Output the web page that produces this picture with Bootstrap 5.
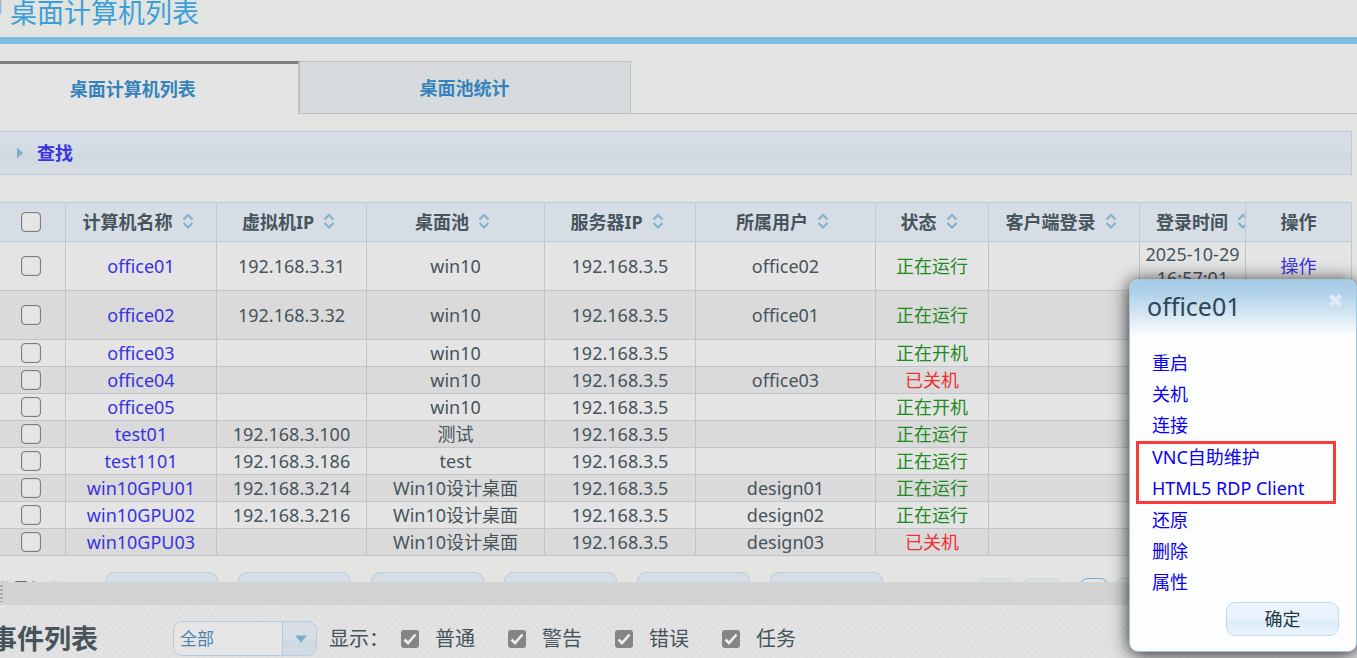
<!DOCTYPE html>
<html lang="zh-CN">
<head>
<meta charset="utf-8">
<meta name="viewport" content="width=device-width, initial-scale=1">
<title>桌面计算机列表</title>
<link rel="stylesheet" href="https://cdn.jsdelivr.net/npm/bootstrap@5.3.0/dist/css/bootstrap.min.css">
<style>
body{font-family:"Noto Sans","Noto Sans CJK SC",sans-serif;font-size:18px;line-height:26px;color:#46545c;background:#e2e4e2}
a{text-decoration:none;color:#3832e2}
.list-pane{min-height:0;background:linear-gradient(#e2e4e2 200px,#e4e4e3 560px)}
.page-head{height:44px;border-bottom:7px solid #7cbee0}
.page-head h1{font-size:27px;line-height:26px;font-weight:400;color:#3d9fd6}
.head-icon{width:2px;height:14px;background:linear-gradient(90deg,#8bb2cf,#d5dade)}
.pane-tabs{margin-top:17px;height:53px;border-bottom:1px solid #bcc1c3}
.pane-tabs a{font-weight:700;color:#3583bb}
.tab-on{width:22%;height:53px;background:#e4e4e4;border-top:3px solid #808080;border-right:1px solid #bcc1c3}
.tab-off{width:332px;height:53px;background:#d6dadd;border:1px solid #bcc1c3}
.find-bar{margin:17px 5px 27px 0;height:44px;border:1px solid #bccbd8;border-left:0;background:linear-gradient(#d7dee7,#d4dce4 48%,#cfd8df 54%,#d8dce5)}
.find-bar a{font-weight:700;color:#3832e2;margin-left:13px}
.grid-wrap{margin-right:5px}
.pc-table{table-layout:fixed;border-collapse:collapse;width:100%;margin-left:-1px;text-align:center}
.pc-table th,.pc-table td{border:1px solid #bfc4c8;padding:0;height:27px;overflow:hidden;white-space:nowrap;vertical-align:middle}
.pc-table th{height:39px;background:#d6dde5;border-color:#bbcbd9;font-weight:700;color:#46545c}
.pc-table th.sortable{padding-right:6px}
.pc-table tbody tr:nth-child(odd){background:#e4e4e4}
.pc-table tbody tr:nth-child(even){background:#dadada}
.pc-table .tall td{height:49px}
.pc-table .stamp{white-space:normal;line-height:24px}
.pc-table svg{margin-left:9px;vertical-align:0}
.w-pick{width:66px}.w-name{width:151px}.w-ip{width:150px}.w-pool{width:178px}.w-user{width:180px}.w-state{width:113px}.w-op{width:106px}
.ok{color:#228a22}.off{color:#ee3030}
.pick{appearance:none;display:block;width:20px;height:20px;margin:0 auto;border:1px solid #7c7c7c;border-radius:4px;background:#e5e5e5;box-shadow:inset 0 0 1px #7c7c7c;position:relative;left:-2px}
.pager{margin-top:16px;gap:20px}
.pager-note{width:91px;margin-left:-6px;padding-top:5px;flex:none;white-space:nowrap}
.act{width:113px;height:34px;flex:none;border:1px solid #bccbd8;border-radius:9px;background:#d6dde5}
.pages{margin-left:72px;padding-top:6px;gap:5px}
.nav-pg{height:30px;width:42px;flex:none;border:1px solid #cfd6dc;border-radius:9px;background:#dce0e3}
.nav-pg.num{width:30px;border-color:#bccbd8}
.nav-pg.now{border-color:#6ba9d4;background:#e2e4e5;margin-left:10px}
.splitter{height:23px;flex:none;background:#d3d3d3}
.grip{width:3px;height:17px;background:repeating-linear-gradient(#aaa 0 2px,#d3d3d3 2px 4px)}
.event-pane{height:53px;flex:none;padding-top:16px;background:repeating-linear-gradient(45deg,rgba(0,0,0,.012) 0 2px,transparent 2px 5px),repeating-linear-gradient(-45deg,rgba(0,0,0,.012) 0 2px,transparent 2px 5px),#e3e3e3}
.event-pane h2{width:108px;margin-left:-10px;font-size:27px;line-height:36px;font-weight:700}
.type-box{width:144px;height:35px;margin:0 12px 0 75px}
.type-box select{appearance:none;width:100%;height:100%;padding:0 6px;border:1px solid #b5cadb;border-radius:9px;color:#4d83aa;font-size:17px;background:linear-gradient(#b5cadb,#b5cadb) 108px 0/1px 100% no-repeat,linear-gradient(#d7dee6 50%,#ccd8e0 60%,#d4dce4) 109px 0/34px 100% no-repeat,#e5e5e5}
.type-box svg{right:10px;top:14px}
.flag{font-size:20px;line-height:36px;gap:16px}
.flags{gap:33px}
.tick{appearance:none;width:18px;height:18px;margin:0;border-radius:3px;background:#858585 url("data:image/svg+xml,%3Csvg xmlns='http://www.w3.org/2000/svg' viewBox='0 0 18 18'%3E%3Cpath d='M3.5 9.5 7 13 14.5 4.5' fill='none' stroke='%23eee' stroke-width='2.6'/%3E%3C/svg%3E")}
.op-dialog{top:279px;right:0;width:228px;border:1px solid #9fc6df;border-radius:9px;background:#fcfefe;box-shadow:0 2px 18px rgba(0,0,0,.85);overflow:hidden}
.dlg-head{height:55px;padding:0 13px 0 17px;background:linear-gradient(#a4cae5,#b4d3ea 28%,#fafdfe)}
.dlg-head h3{font-size:25px;line-height:52px;font-weight:400;color:#2f4656}
.dlg-head button{margin-top:13px;height:15px;line-height:0}
.dlg-list{margin:13px 0 0 22px;line-height:31px}
.dlg-list a{color:#0a00f0;display:block}
.marked{position:relative;margin:1px 0}
.marked::after{content:"";position:absolute;left:-16px;top:-1px;width:200px;height:63px;border:3px solid #f93a3a;pointer-events:none}
.dlg-ok{width:113px;height:34px;margin:4px 17px 15px auto;border:1px solid #c0dbee;border-radius:9px;color:#233942;background:linear-gradient(#eaf3fc 50%,#ddedfa 54%,#eaf3fc)}
</style>
</head>
<body class="vh-100 d-flex flex-column overflow-hidden position-relative">
<main class="list-pane flex-grow-1 overflow-hidden">
  <header class="page-head d-flex"><span class="head-icon me-2"></span><h1 class="mb-0">桌面计算机列表</h1></header>
  <nav class="pane-tabs d-flex">
    <a href="#" class="tab-on d-flex align-items-center justify-content-center pe-5"><span class="ps-3">桌面计算机列表</span></a>
    <a href="#" class="tab-off d-flex align-items-center justify-content-center">桌面池统计</a>
  </nav>
  <section class="find-bar d-flex align-items-center ps-3">
    <svg width="8" height="12" viewBox="0 0 8 12"><path d="M1 0.500 7 6 1 11.500Z" fill="#7fadcb"/></svg>
    <a href="#">查找</a>
  </section>
  <svg class="d-none"><symbol id="sort" viewBox="0 0 12 16"><path d="M1.500 6.500 6 2l4.500 4.500M1.500 10 6 14.500 10.500 10" fill="none" stroke="#80b0cd" stroke-width="2"/></symbol></svg>
  <div class="grid-wrap">
  <table class="pc-table">
    <colgroup><col class="w-pick"><col class="w-name"><col class="w-ip"><col class="w-pool"><col class="w-name"><col class="w-user"><col class="w-state"><col class="w-name"><col class="w-op"><col class="w-op"></colgroup>
    <thead><tr>
      <th><input class="pick" type="checkbox" aria-label="全选"></th>
      <th class="sortable">计算机名称<svg width="12" height="16"><use href="#sort"/></svg></th>
      <th class="sortable">虚拟机IP<svg width="12" height="16"><use href="#sort"/></svg></th>
      <th class="sortable">桌面池<svg width="12" height="16"><use href="#sort"/></svg></th>
      <th class="sortable">服务器IP<svg width="12" height="16"><use href="#sort"/></svg></th>
      <th class="sortable">所属用户<svg width="12" height="16"><use href="#sort"/></svg></th>
      <th class="sortable">状态<svg width="12" height="16"><use href="#sort"/></svg></th>
      <th class="sortable">客户端登录<svg width="12" height="16"><use href="#sort"/></svg></th>
      <th class="text-start"><span class="ps-3">登录时间</span><svg width="12" height="16"><use href="#sort"/></svg></th>
      <th>操作</th>
    </tr></thead>
    <tbody>
      <tr class="tall"><td><input class="pick" type="checkbox" aria-label="office01"></td><td><a href="#">office01</a></td><td>192.168.3.31</td><td>win10</td><td>192.168.3.5</td><td>office02</td><td class="ok">正在运行</td><td></td><td class="stamp">2025-10-29 16:57:01</td><td><a href="#">操作</a></td></tr>
      <tr class="tall"><td><input class="pick" type="checkbox" aria-label="office02"></td><td><a href="#">office02</a></td><td>192.168.3.32</td><td>win10</td><td>192.168.3.5</td><td>office01</td><td class="ok">正在运行</td><td></td><td></td><td></td></tr>
      <tr><td><input class="pick" type="checkbox" aria-label="office03"></td><td><a href="#">office03</a></td><td></td><td>win10</td><td>192.168.3.5</td><td></td><td class="ok">正在开机</td><td></td><td></td><td></td></tr>
      <tr><td><input class="pick" type="checkbox" aria-label="office04"></td><td><a href="#">office04</a></td><td></td><td>win10</td><td>192.168.3.5</td><td>office03</td><td class="off">已关机</td><td></td><td></td><td></td></tr>
      <tr><td><input class="pick" type="checkbox" aria-label="office05"></td><td><a href="#">office05</a></td><td></td><td>win10</td><td>192.168.3.5</td><td></td><td class="ok">正在开机</td><td></td><td></td><td></td></tr>
      <tr><td><input class="pick" type="checkbox" aria-label="test01"></td><td><a href="#">test01</a></td><td>192.168.3.100</td><td>测试</td><td>192.168.3.5</td><td></td><td class="ok">正在运行</td><td></td><td></td><td></td></tr>
      <tr><td><input class="pick" type="checkbox" aria-label="test1101"></td><td><a href="#">test1101</a></td><td>192.168.3.186</td><td>test</td><td>192.168.3.5</td><td></td><td class="ok">正在运行</td><td></td><td></td><td></td></tr>
      <tr><td><input class="pick" type="checkbox" aria-label="win10GPU01"></td><td><a href="#">win10GPU01</a></td><td>192.168.3.214</td><td>Win10设计桌面</td><td>192.168.3.5</td><td>design01</td><td class="ok">正在运行</td><td></td><td></td><td></td></tr>
      <tr><td><input class="pick" type="checkbox" aria-label="win10GPU02"></td><td><a href="#">win10GPU02</a></td><td>192.168.3.216</td><td>Win10设计桌面</td><td>192.168.3.5</td><td>design02</td><td class="ok">正在运行</td><td></td><td></td><td></td></tr>
      <tr><td><input class="pick" type="checkbox" aria-label="win10GPU03"></td><td><a href="#">win10GPU03</a></td><td></td><td>Win10设计桌面</td><td>192.168.3.5</td><td>design03</td><td class="off">已关机</td><td></td><td></td><td></td></tr>
    </tbody>
  </table>
  </div>
  <div class="pager d-flex">
    <span class="pager-note">批量操作</span>
    <button class="act" aria-label="启动"></button><button class="act" aria-label="关机"></button><button class="act" aria-label="重启"></button><button class="act" aria-label="还原"></button><button class="act" aria-label="删除"></button><button class="act" aria-label="刷新"></button>
    <div class="pages d-flex">
      <button class="nav-pg" aria-label="首页"></button><button class="nav-pg" aria-label="上一页"></button><button class="nav-pg num now" aria-label="第一页"></button><button class="nav-pg num" aria-label="第二页"></button>
    </div>
  </div>
</main>
<div class="splitter d-flex align-items-center"><span class="grip"></span></div>
<footer class="event-pane d-flex align-items-start overflow-hidden">
  <h2 class="mb-0 flex-shrink-0">事件列表</h2>
  <div class="type-box position-relative flex-shrink-0">
    <select aria-label="事件类型"><option>全部</option></select>
    <svg class="position-absolute pe-none" width="12" height="8" viewBox="0 0 12 8"><path d="M0 .5H12L6 7.500Z" fill="#7badce"/></svg>
  </div>
  <span class="flag">显示：</span>
  <div class="flags d-flex ms-2">
    <label class="flag d-flex align-items-center ms-1"><input class="tick" type="checkbox" checked>普通</label>
    <label class="flag d-flex align-items-center"><input class="tick" type="checkbox" checked>警告</label>
    <label class="flag d-flex align-items-center"><input class="tick" type="checkbox" checked>错误</label>
    <label class="flag d-flex align-items-center"><input class="tick" type="checkbox" checked>任务</label>
  </div>
</footer>
<div class="op-dialog position-absolute" role="dialog" aria-labelledby="dlgTitle">
  <div class="dlg-head d-flex justify-content-between align-items-start">
    <h3 id="dlgTitle" class="mb-0">office01</h3>
    <button class="border-0 bg-transparent p-0" aria-label="关闭"><svg width="15" height="15" viewBox="0 0 15 15"><path d="M2.500 2.500 12.500 12.500M12.500 2.500 2.500 12.500" stroke="#dfe9f6" stroke-width="4.500"/></svg></button>
  </div>
  <div class="dlg-list">
    <a href="#">重启</a><a href="#">关机</a><a href="#">连接</a>
    <div class="marked"><a href="#">VNC自助维护</a><a href="#">HTML5 RDP Client</a></div>
    <a href="#">还原</a><a href="#">删除</a><a href="#">属性</a>
  </div>
  <button class="dlg-ok d-block">确定</button>
</div>
<script src="https://cdn.jsdelivr.net/npm/bootstrap@5.3.0/dist/js/bootstrap.bundle.min.js"></script>
</body>
</html>
